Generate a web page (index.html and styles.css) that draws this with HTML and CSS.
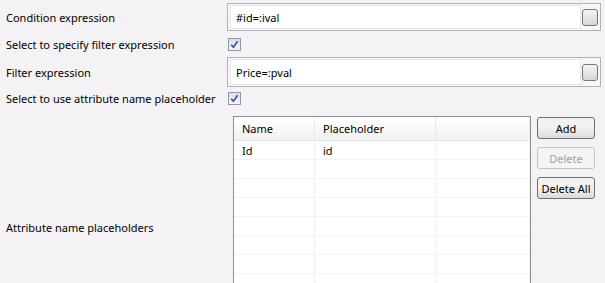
FILE: index.html
```html
<!DOCTYPE html>
<html lang="en">
<head>
  <meta charset="UTF-8">
  <title>Filter settings</title>
  <link rel="stylesheet" href="styles.css">
</head>
<body>

  <div class="form">
    <div class="row row-cond">
      <label class="label">Condition expression</label>
      <div class="field">
        <div class="field-text">#id=:ival</div>
        <button class="dots"></button>
      </div>
    </div>

    <div class="row row-check1">
      <label class="label">Select to specify filter expression</label>
      <span class="check">
        <svg width="13" height="13" viewBox="0 0 13 13"><path d="M3.2 6.8 L5.4 9.3 L9.6 3.2" fill="none" stroke="#3a4c9e" stroke-width="1.6"/></svg>
      </span>
    </div>

    <div class="row row-filter">
      <label class="label">Filter expression</label>
      <div class="field">
        <div class="field-text">Price=:pval</div>
        <button class="dots"></button>
      </div>
    </div>

    <div class="row row-check2">
      <label class="label">Select to use attribute name placeholder</label>
      <span class="check">
        <svg width="13" height="13" viewBox="0 0 13 13"><path d="M3.2 6.8 L5.4 9.3 L9.6 3.2" fill="none" stroke="#3a4c9e" stroke-width="1.6"/></svg>
      </span>
    </div>

    <div class="row row-table">
      <label class="label">Attribute name placeholders</label>
      <div class="table-wrap">
        <div class="table-box">
          <table class="grid">
            <thead>
              <tr><th>Name</th><th>Placeholder</th><th></th></tr>
            </thead>
            <tbody>
              <tr><td>Id</td><td>id</td><td></td></tr>
              <tr><td></td><td></td><td></td></tr>
              <tr><td></td><td></td><td></td></tr>
              <tr><td></td><td></td><td></td></tr>
              <tr><td></td><td></td><td></td></tr>
              <tr><td></td><td></td><td></td></tr>
              <tr><td></td><td></td><td></td></tr>
              <tr><td></td><td></td><td></td></tr>
              <tr><td></td><td></td><td></td></tr>
              <tr><td></td><td></td><td></td></tr>
              <tr><td></td><td></td><td></td></tr>
            </tbody>
          </table>
        </div>
        <div class="buttons">
          <button class="btn">Add</button>
          <button class="btn" disabled>Delete</button>
          <button class="btn">Delete All</button>
        </div>
      </div>
    </div>
  </div>

</body>
</html>
```

FILE: styles.css
```css
html, body {
  margin: 0;
  height: 283px;
  overflow: hidden;
}

body {
  background-color: #f5f2f6;
  font-family: "Noto Sans", sans-serif;
  font-size: 11px;
  color: #000;
}

.form {
  padding: 3px 4px 0 6px;
}

.row {
  display: flex;
  align-items: center;
}

.label {
  width: 221px;
  flex-shrink: 0;
}

.row-cond { height: 28px; }
.row-check1 { height: 26px; }
.row-filter { height: 30px; }
.row-check2 { height: 23px; }
.row-table { margin-top: 6px; height: 222px; }

.check {
  width: 11px;
  height: 11px;
  margin-left: 1px;
  border: 1px solid #9296a8;
  background: linear-gradient(#dcdfe8, #f5f6f9);
  display: flex;
}

.check svg {
  margin: -1px;
}

.field {
  flex: 1;
  height: 100%;
  box-sizing: border-box;
  border: 1px solid #b4b2b6;
  background: #f7f5f8;
  display: flex;
  align-items: center;
  padding: 1px 2px;
  gap: 1px;
}

.field-text {
  flex: 1;
  height: 100%;
  box-sizing: border-box;
  background: #fff;
  border: 1px solid #e6e5e8;
  padding-left: 5px;
  display: flex;
  align-items: center;
}

.dots {
  width: 16px;
  height: 17px;
  border: 1px solid #76767a;
  border-radius: 3px;
  background: linear-gradient(#f4f4f4, #d6d6d6);
  padding: 0;
}

.table-wrap {
  display: flex;
  align-items: flex-start;
  height: 100%;
  margin-left: 6px;
  gap: 6px;
}

.table-box {
  width: 298px;
  height: 222px;
  box-sizing: border-box;
  border: 1px solid #8e8e90;
  background: #fff;
  overflow: hidden;
}

.grid {
  width: 100%;
  border-collapse: collapse;
  table-layout: fixed;
}

.grid th {
  height: 23px;
  padding: 0 0 0 8px;
  text-align: left;
  font-weight: normal;
  background: linear-gradient(#ffffff, #f1f1f1);
  border-right: 1px solid #e8e8e8;
  border-bottom: 1px solid #e4e4e4;
}

.grid th:nth-child(1) { width: 72px; }
.grid th:nth-child(2) { width: 112px; }

.grid td {
  height: 18px;
  padding: 0 0 0 8px;
  border-right: 1px solid #f1f1f1;
  border-bottom: 1px solid #f3f3f3;
}

.buttons {
  display: flex;
  flex-direction: column;
  gap: 8px;
  padding-top: 1px;
}

.btn {
  width: 58px;
  height: 22px;
  padding: 0;
  font-family: "Noto Sans", sans-serif;
  font-size: 11px;
  color: #000;
  border: 1px solid #707070;
  border-radius: 3px;
  background: linear-gradient(#f2f2f2 45%, #dcdcdc);
}

.btn:disabled {
  color: #a0a0a0;
  border-color: #c4c4c4;
  background: #f4f4f4;
}
```
